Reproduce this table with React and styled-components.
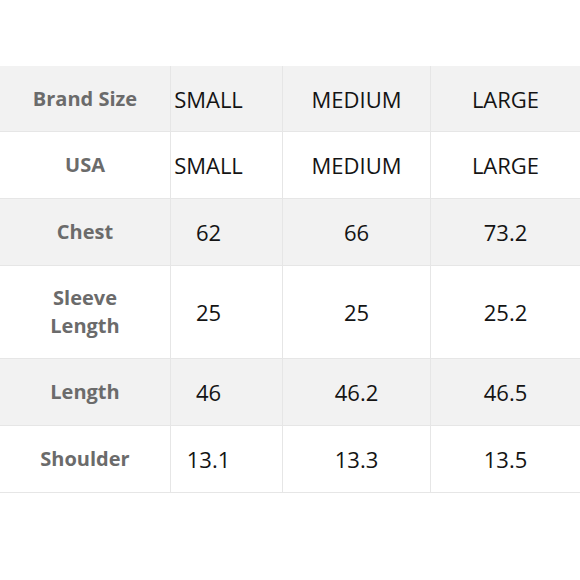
import React from "react";
import styled, { createGlobalStyle } from "styled-components";

const GlobalStyle = createGlobalStyle`
  body {
    margin: 0;
    background: #ffffff;
    font-family: "Open Sans", "Noto Sans", sans-serif;
  }
`;

const Page = styled.div`
  width: 580px;
  height: 580px;
  padding-top: 66px;
  box-sizing: border-box;
  background: #ffffff;
`;

const Table = styled.div`
  display: flex;
  flex-direction: column;
`;

const Row = styled.div`
  display: grid;
  grid-template-columns: 170px 112px 148px 150px;
  height: ${(p) => p.$height}px;
  background: ${(p) => (p.$shade ? "#f2f2f2" : "#ffffff")};
  border-bottom: 1px solid #e6e6e6;
  box-sizing: border-box;
`;

const Label = styled.div`
  display: flex;
  align-items: center;
  justify-content: center;
  text-align: center;
  font-size: 20px;
  font-weight: 700;
  line-height: 28px;
  color: #6b6b6b;
`;

const Value = styled.div`
  display: flex;
  align-items: center;
  justify-content: center;
  border-left: 1px solid #e6e6e6;
  padding-right: ${(p) => p.$pad || 0}px;
  font-size: 22px;
  color: #141414;
  box-sizing: border-box;
`;

const rows = [
  { label: "Brand Size", values: ["SMALL", "MEDIUM", "LARGE"], height: 66 },
  { label: "USA", values: ["SMALL", "MEDIUM", "LARGE"], height: 67 },
  { label: "Chest", values: ["62", "66", "73.2"], height: 67 },
  { label: ["Sleeve", "Length"], values: ["25", "25", "25.2"], height: 93 },
  { label: "Length", values: ["46", "46.2", "46.5"], height: 67 },
  { label: "Shoulder", values: ["13.1", "13.3", "13.5"], height: 67 },
];

export default function App() {
  return (
    <Page>
      <GlobalStyle />
      <Table>
        {rows.map((row, i) => (
          <Row key={i} $shade={i % 2 === 0} $height={row.height}>
            <Label>
              {Array.isArray(row.label) ? (
                <span>
                  {row.label[0]}
                  <br />
                  {row.label[1]}
                </span>
              ) : (
                row.label
              )}
            </Label>
            {row.values.map((v, j) => (
              <Value key={j} $pad={j === 0 ? 36 : 0}>
                {v}
              </Value>
            ))}
          </Row>
        ))}
      </Table>
    </Page>
  );
}
